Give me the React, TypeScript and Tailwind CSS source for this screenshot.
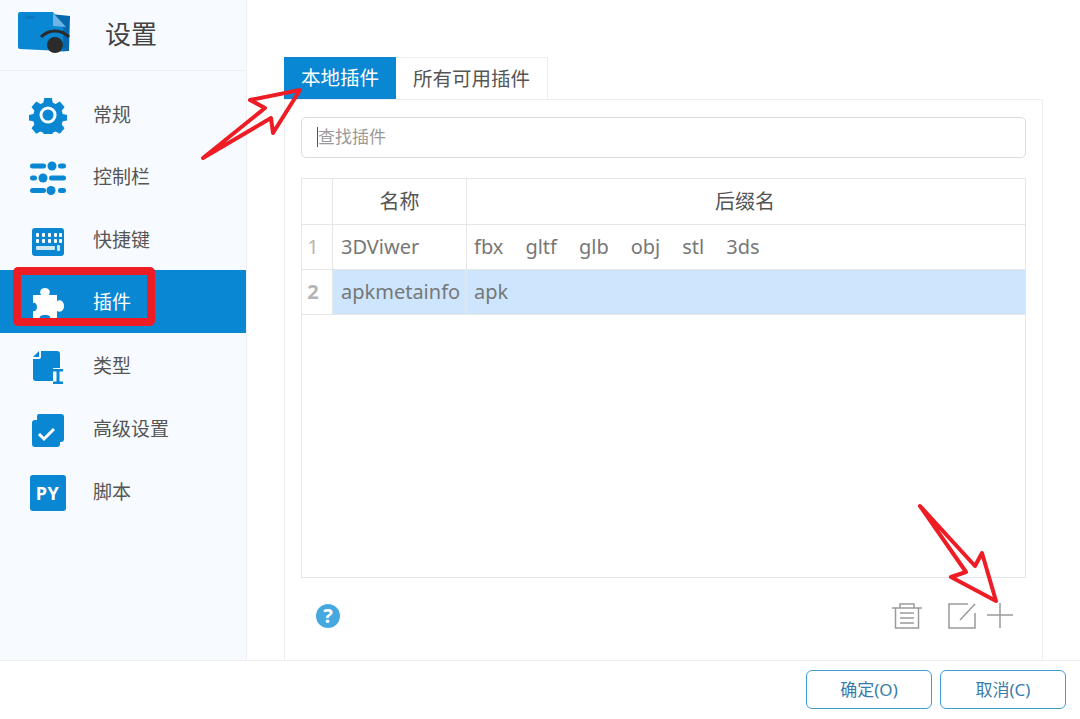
const FONT = 'font-["Noto_Sans","Noto_Sans_CJK_SC",sans-serif]'

function GearIcon() {
  return (
    <svg width="38" height="38" viewBox="0 0 38 38">
      <path
        fill="#0a87d3"
        fillRule="evenodd"
        d="M15 1h8l1 5 3 1.400 4.400-2.600 5 5.800-3 4 1 3.400 5 1v5.600l-5 1-1 3.400 3 4-5 5.800-4.400-2.600-3 1.400-1 5h-8l-1-5-3-1.400-4.400 2.600-5-5.800 3-4-1-3.400-5-1v-5.600l5-1 1-3.400-3-4 5-5.800 4.400 2.600 3-1.400zM19 10a9 9 0 1 0 0 18 9 9 0 0 0 0-18z"
        transform="translate(1 1) scale(.95)"
      />
      <circle cx="19" cy="19" r="5.500" fill="#0a87d3" />
    </svg>
  )
}

function SlidersIcon() {
  return (
    <svg width="38" height="34" viewBox="0 0 38 34" fill="#0a87d3">
      <rect x="1" y="2.500" width="16" height="5" rx="2.500" />
      <circle cx="23" cy="5" r="4.500" />
      <rect x="29" y="2.500" width="8" height="5" rx="2.500" />
      <rect x="1" y="14.500" width="7" height="5" rx="2.500" />
      <circle cx="14" cy="17" r="4.500" />
      <rect x="20" y="14.500" width="17" height="5" rx="2.500" />
      <rect x="1" y="27" width="16" height="5" rx="2.500" />
      <circle cx="22" cy="29.500" r="4.500" />
      <rect x="29" y="27" width="8" height="5" rx="2.500" />
    </svg>
  )
}

function KeyboardIcon() {
  const keys = [
    [5, 6], [11, 6], [17, 6], [23, 6], [28, 6],
    [5, 12], [11, 12], [17, 12], [23, 12], [28, 12],
  ]
  return (
    <svg width="34" height="30" viewBox="0 0 34 30">
      <rect x="1" y="1" width="32" height="28" rx="3" fill="#0a87d3" />
      {keys.map(([x, y]) => (
        <rect key={`${x}-${y}`} x={x} y={y} width="3" height="4" rx="1" fill="#fff" />
      ))}
      <rect x="5" y="19" width="19" height="4" rx="1" fill="#cfe7f6" />
      <rect x="26" y="18" width="3" height="6" rx="1" fill="#cfe7f6" />
    </svg>
  )
}

function PuzzleIcon() {
  return (
    <svg width="34" height="34" viewBox="0 0 34 34">
      <path
        fill="#fff"
        d="M2 8H10C8 4 10 1 14 1C18 1 20 4 18 8H26V14C30 12 33 15 33 19C33 23 30 26 26 24V32H19C20 29 18 28 14 28C10 28 8 29 9 32H2V24C4 25 6 23 6 20C6 17 4 15 2 16Z"
      />
    </svg>
  )
}

function FileTypeIcon() {
  return (
    <svg width="34" height="34" viewBox="0 0 34 34" fill="#0a87d3">
      <path d="M10 1H26a3 3 0 0 1 3 3v14h-7v13H5a3 3 0 0 1-3-3V9h6a2 2 0 0 0 2-2z" />
      <path d="M2 7l6-6v6z" />
      <path d="M22 19h10v2.500h-3.500v10H32V34H22v-2.500h3.500v-10H22z" />
    </svg>
  )
}

function CheckBoxIcon() {
  return (
    <svg width="34" height="34" viewBox="0 0 34 34">
      <path
        fill="#0a87d3"
        d="M8 1h22a3 3 0 0 1 3 3v22a3 3 0 0 1-3 3h-1v2a3 3 0 0 1-3 3H4a3 3 0 0 1-3-3V10a3 3 0 0 1 3-3h2V3a2 2 0 0 1 2-2z"
      />
      <path d="M8 21l5 5 10-10" fill="none" stroke="#fff" strokeWidth="3" />
    </svg>
  )
}

function PyIcon() {
  return (
    <div className="flex h-[36px] w-[36px] items-center justify-center rounded-[3px] bg-[#0a87d3] font-['Noto_Sans',sans-serif] text-[18px] font-bold tracking-[0.5px] text-white">
      PY
    </div>
  )
}

function LogoIcon() {
  return (
    <svg width="54" height="42" viewBox="0 0 54 42">
      <path d="M34 3l19 2-1 35-18 1z" fill="#0669ad" />
      <path d="M1 3a2 2 0 0 1 2-2h33l10 12v25a2 2 0 0 1-2 2L3 38a2 2 0 0 1-2-2z" fill="#0a87d3" />
      <path d="M36 2l13 14-13-1z" fill="#6fb4e2" />
      <text x="8" y="8" fontSize="5" fill="#0669ad">Seer</text>
      <path d="M24 26c8-8 20-8 28 0" fill="none" stroke="#2b2b2b" strokeWidth="3" />
      <circle cx="38" cy="34" r="8" fill="#2b2b2b" />
    </svg>
  )
}

const NAV = [
  { label: '常规', icon: <GearIcon />, h: 'h-[62px]', iconClass: 'mt-[2px]' },
  { label: '控制栏', icon: <SlidersIcon />, h: 'h-[63px]', iconClass: 'mt-[3px]' },
  { label: '快捷键', icon: <KeyboardIcon />, h: 'h-[62px]', iconClass: 'mt-[6px]' },
  { label: '插件', icon: <PuzzleIcon />, h: 'h-[63px]', iconClass: 'mt-[4px]', active: true },
  { label: '类型', icon: <FileTypeIcon />, h: 'h-[64px]', iconClass: 'mt-[3px]' },
  { label: '高级设置', icon: <CheckBoxIcon />, h: 'h-[62px]', iconClass: 'mt-[4px]' },
  { label: '脚本', icon: <PyIcon />, h: 'h-[65px]', iconClass: 'mt-[3px]' },
]

function Sidebar() {
  return (
    <aside className="flex h-[660px] w-[247px] shrink-0 flex-col border-r border-[#eef0f3] bg-[#f7fbff]">
      <div className="flex h-[71px] items-center border-b border-[#eef1f4] pl-[17px]">
        <div className="mt-[-6px] w-[88px]">
          <LogoIcon />
        </div>
        <span className="-mt-[2px] text-[26px] text-[#444]">设置</span>
      </div>
      <nav className="flex flex-col pt-[12px]">
        {NAV.map((item) => (
          <div
            key={item.label}
            className={`flex items-center ${item.h} ${item.active ? 'bg-[#0a87d3] text-white' : 'text-[#555]'}`}
          >
            <div className={`flex w-[93px] shrink-0 justify-center pl-[2px] ${item.iconClass}`}>{item.icon}</div>
            <span className="mt-[2px] text-[19px]">{item.label}</span>
          </div>
        ))}
      </nav>
    </aside>
  )
}

function Tabs() {
  return (
    <div className="flex h-[42px]">
      <div className="flex w-[112px] items-center justify-center bg-[#0a87d3] text-[19.500px] text-white">
        本地插件
      </div>
      <div className="flex w-[152px] items-center justify-center border-t border-r border-[#eeeeee] text-[19.500px] text-[#555]">
        所有可用插件
      </div>
    </div>
  )
}

function PluginTable() {
  return (
    <div className="h-[400px] border border-[#e6e6e6] text-[20px] text-[#777]">
      <div className="flex h-[46px] border-b border-[#e6e6e6] text-[#555]">
        <div className="w-[31px] border-r border-[#e6e6e6]" />
        <div className="flex w-[134px] items-center justify-center border-r border-[#e6e6e6]">名称</div>
        <div className="flex flex-1 items-center justify-center pr-[2px]">后缀名</div>
      </div>
      <div className="flex h-[45px] border-b border-[#e6e6e6]">
        <div className="flex w-[31px] items-center justify-center border-r border-[#e6e6e6] pr-[8px] text-[#b5b5b5]">1</div>
        <div className="flex w-[134px] items-center border-r border-[#e6e6e6] pl-[8px]">3DViwer</div>
        <div className="flex flex-1 items-center gap-[22px] pl-[7px]">
          <span>fbx</span>
          <span>gltf</span>
          <span>glb</span>
          <span>obj</span>
          <span>stl</span>
          <span>3ds</span>
        </div>
      </div>
      <div className="flex h-[45px] border-b border-[#e6e6e6]">
        <div className="flex w-[31px] items-center justify-center border-r border-[#e6e6e6] pr-[8px] font-bold text-[#b5b5b5]">2</div>
        <div className="flex w-[134px] items-center border-r border-[#e0e6ec] bg-[#cde6fd] pl-[8px]">apkmetainfo</div>
        <div className="flex flex-1 items-center bg-[#cde6fd] pl-[7px]">apk</div>
      </div>
    </div>
  )
}

function Toolbar() {
  return (
    <div className="flex items-center pt-[25px]">
      <div className="ml-[15px] flex h-[24px] w-[24px] items-center justify-center rounded-full bg-[#45a9e0] text-[20px] font-bold text-white">
        ?
      </div>
      <div className="ml-auto flex items-center pr-[13px]">
        <svg width="30" height="26" viewBox="0 0 30 26" fill="none" stroke="#9a9a9a" strokeWidth="1.500">
          <path d="M0 5h30M8 5V1h14v4M3.500 5v20h23V5M8 10h14M8 15h14M8 20h14" />
        </svg>
        <svg className="ml-[26px]" width="28" height="26" viewBox="0 0 28 26" fill="none" stroke="#9a9a9a" strokeWidth="1.500">
          <path d="M20 1H1v24h26V10M12 17L27 1" />
        </svg>
        <svg className="ml-[11px]" width="26" height="26" viewBox="0 0 26 26" fill="none" stroke="#9a9a9a" strokeWidth="1.500">
          <path d="M0 12h26M13 0v25" />
        </svg>
      </div>
    </div>
  )
}

function Annotations() {
  return (
    <svg className="pointer-events-none absolute top-0 left-0" width="1080" height="719" fill="none">
      <path
        d="M203 158L265 108 250 100 300 90 273 133 271 118z"
        stroke="#ee1c25"
        strokeWidth="4"
        strokeLinejoin="round"
      />
      <path
        d="M920 506L975 566 982 553 996 601 951 577 966 572z"
        stroke="#ee1c25"
        strokeWidth="4"
        strokeLinejoin="round"
      />
    </svg>
  )
}

export default function App() {
  return (
    <div className={`relative h-[719px] w-[1080px] overflow-hidden bg-white ${FONT}`}>
      <div className="flex h-[660px]">
        <Sidebar />
        <main className="flex-1 pt-[57px] pl-[37px]">
          <Tabs />
          <div className="h-[561px] w-[759px] border-t border-r border-l border-[#eeeeee] px-[16px] pt-[17px]">
            <div className="mb-[20px] flex h-[41px] items-center rounded-[5px] border border-[#dcdcdc] pb-[2px] pl-[15px] text-[17px] text-[#999]">
              <span className="h-[20px] w-px bg-[#555]" />
              查找插件
            </div>
            <PluginTable />
            <Toolbar />
          </div>
        </main>
      </div>
      <footer className="flex h-[59px] items-start justify-end gap-[8px] border-t border-[#eeeeee] pt-[9px] pr-[14px]">
        <button className="h-[39px] w-[126px] rounded-[6px] border border-[#3d9bd6] text-[17px] text-[#3a7ca8]">确定(O)</button>
        <button className="h-[39px] w-[126px] rounded-[6px] border border-[#3d9bd6] text-[17px] text-[#3a7ca8]">取消(C)</button>
      </footer>
      <div className="absolute top-[267px] left-[13px] h-[59px] w-[142px] rounded-[5px] border-[8px] border-[#ee1c25]" />
      <Annotations />
    </div>
  )
}
